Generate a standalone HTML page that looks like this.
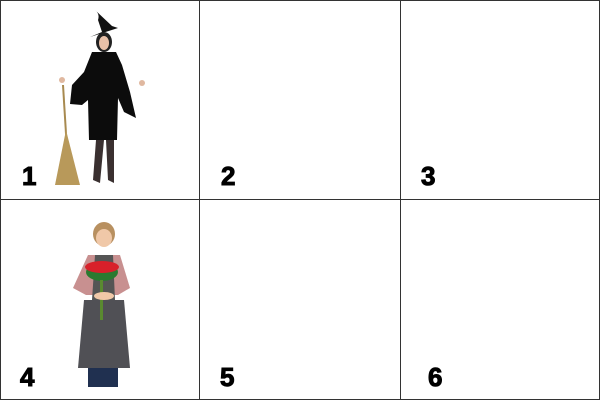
<!DOCTYPE html><html><head><style>
body{margin:0;width:600px;height:400px;background:#fff;position:relative;overflow:hidden;font-family:"Liberation Sans",sans-serif}
.l{position:absolute;background:#333}
.n{position:absolute;font-weight:bold;font-size:26px;color:#000;line-height:1;-webkit-text-stroke:1px #000}
</style></head><body>
<div class="l" style="left:0;top:0;width:600px;height:1px"></div>
<div class="l" style="left:0;top:399px;width:600px;height:1px"></div>
<div class="l" style="left:0;top:0;width:1px;height:400px"></div>
<div class="l" style="left:599px;top:0;width:1px;height:400px"></div>
<div class="l" style="left:199px;top:0;width:1px;height:400px"></div>
<div class="l" style="left:400px;top:0;width:1px;height:400px"></div>
<div class="l" style="left:0;top:199px;width:600px;height:1px"></div>
<svg style="position:absolute;left:0;top:0" width="200" height="200">
<line x1="63" y1="85" x2="67" y2="150" stroke="#a88a50" stroke-width="2"/>
<path d="M66 130 L55 185 L80 185 Z" fill="#b8995a"/>
<path d="M95 10 Q100 14 98 20 L102 32 L90 37 L118 28 L112 26 Z" fill="#111"/>
<ellipse cx="104" cy="42" rx="8" ry="10" fill="#222"/>
<ellipse cx="104" cy="43" rx="5" ry="7" fill="#e8c0a8"/>
<path d="M92 52 L116 52 L122 65 L130 92 L136 118 L124 112 L118 98 L117 140 L89 140 L88 100 L82 105 L70 104 L72 85 L84 72 Z" fill="#0c0c0c"/>
<path d="M96 140 L93 180 L100 183 L104 140 Z M106 140 L108 180 L114 183 L114 140 Z" fill="#3a3030"/>
<circle cx="62" cy="80" r="3" fill="#e0b8a0"/><circle cx="142" cy="83" r="3" fill="#e0b8a0"/>
</svg>
<svg style="position:absolute;left:0;top:200" width="200" height="200">
<ellipse cx="104" cy="34" rx="11" ry="12" fill="#b89060"/>
<ellipse cx="104" cy="38" rx="8" ry="9" fill="#f0c8a8"/>
<path d="M88 55 L120 55 L130 88 L118 95 L86 95 L73 88 Z" fill="#c89090"/>
<path d="M84 100 L124 100 L130 168 L78 168 Z" fill="#505055"/>
<path d="M95 55 L113 55 L115 100 L92 100 Z" fill="#555"/>
<rect x="88" y="168" width="30" height="19" fill="#203050"/>
<ellipse cx="102" cy="72" rx="16" ry="9" fill="#2a7a30"/>
<ellipse cx="102" cy="67" rx="17" ry="6" fill="#d8202a"/>
<rect x="100" y="80" width="3" height="40" fill="#5a8a30"/>
<ellipse cx="104" cy="96" rx="10" ry="4" fill="#f0c8a8"/>
</svg>
<div class="n" style="left:22px;top:163px">1</div>
<div class="n" style="left:221px;top:163px">2</div>
<div class="n" style="left:421px;top:163px">3</div>
<div class="n" style="left:20px;top:364px">4</div>
<div class="n" style="left:220px;top:364px">5</div>
<div class="n" style="left:428px;top:364px">6</div>
</body></html>
